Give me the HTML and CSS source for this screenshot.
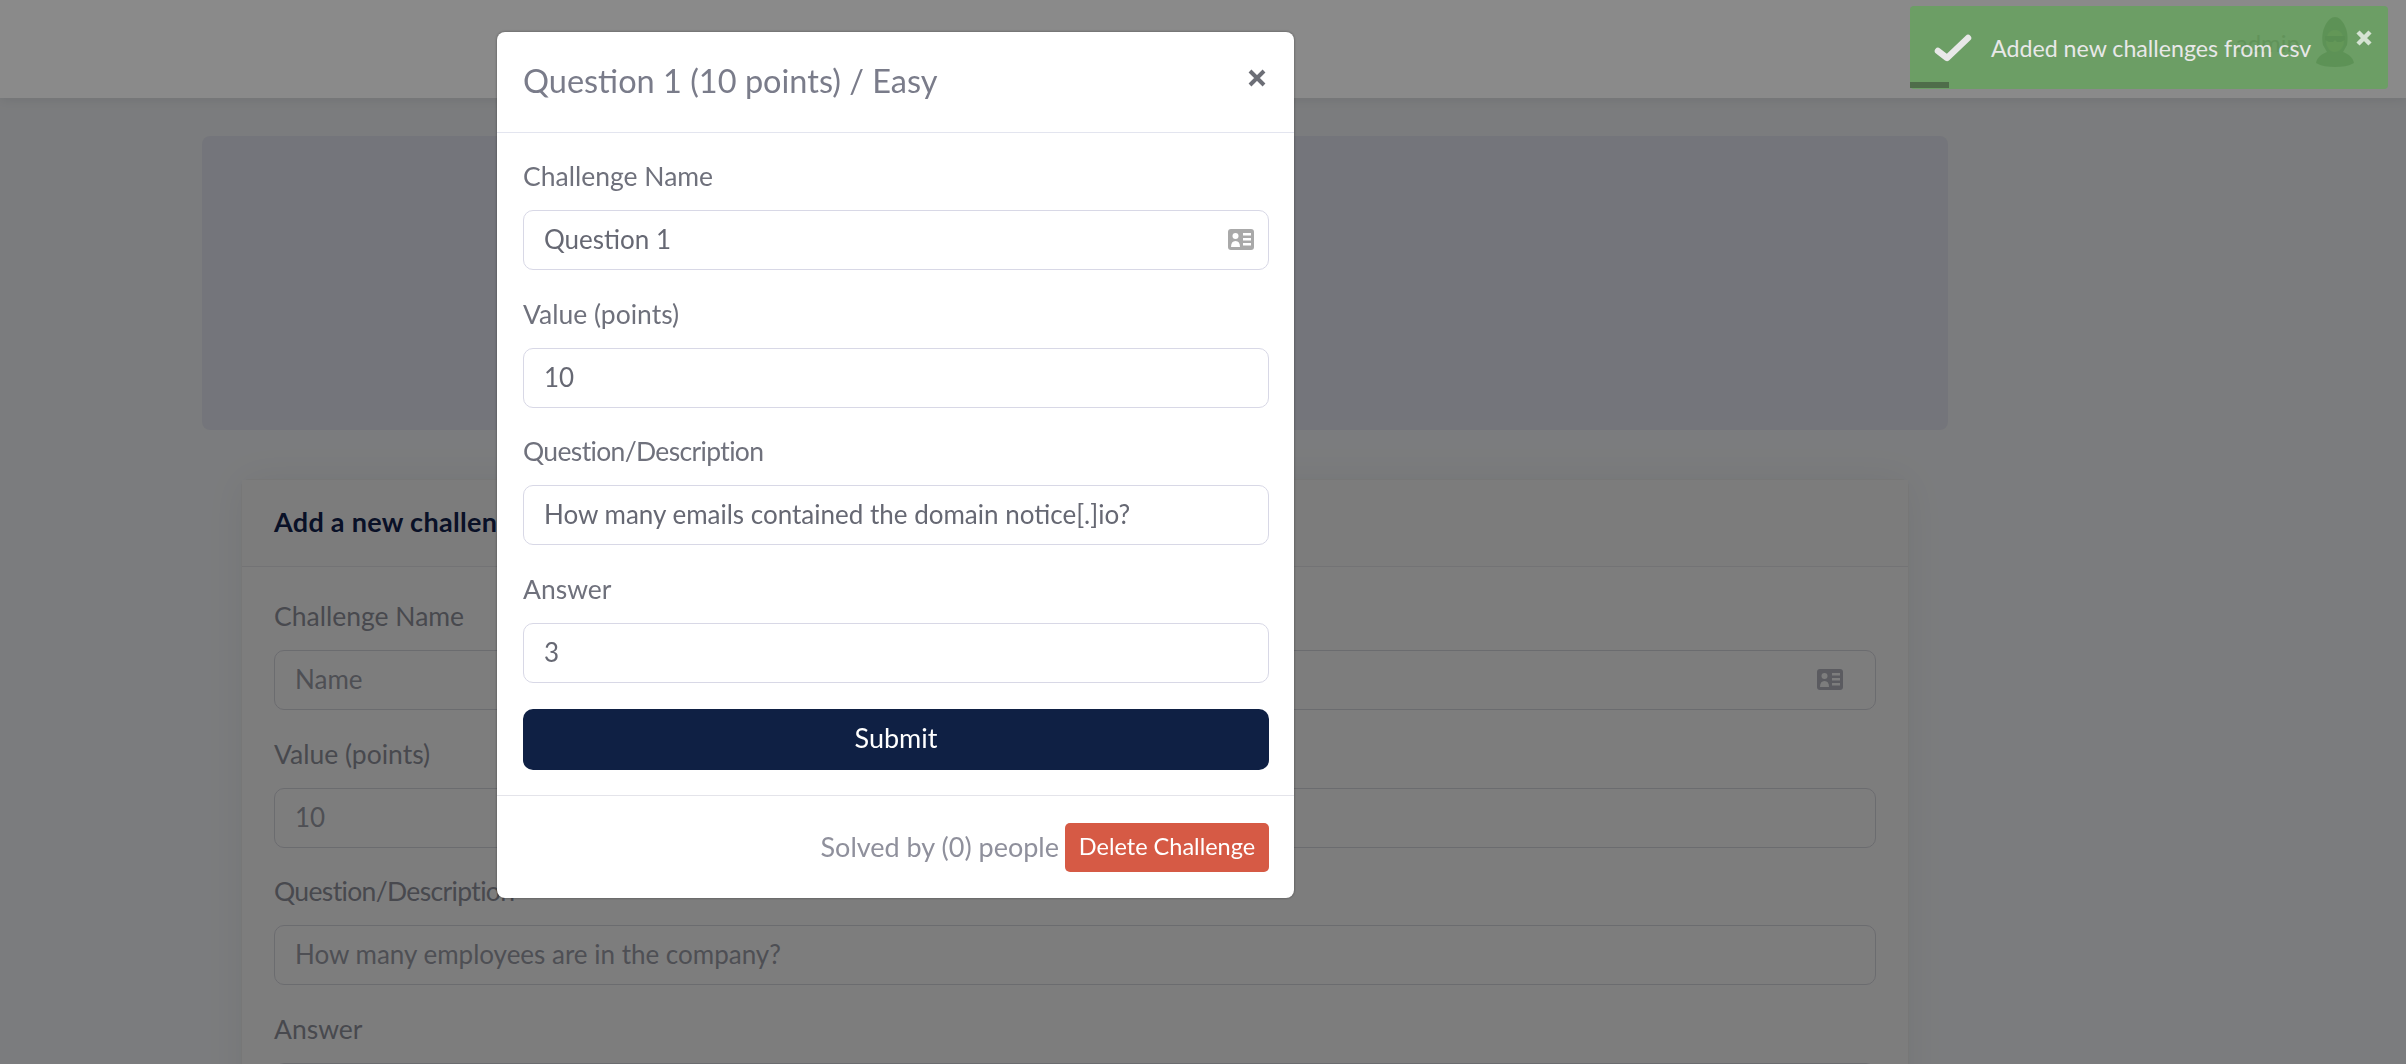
FILE: index.html
```html
<!DOCTYPE html>
<html lang="en">
<head>
    <meta charset="UTF-8">
    <title>Challenges</title>
    <link rel="stylesheet" href="styles.css">
</head>
<body>
    <nav class="navbar">
        <span class="nav-user">admin</span>
        <svg class="avatar" viewBox="0 0 44 52" width="44" height="52">
            <path d="M3 47c1-6 6-9 11-11l-4-7C7 14 15 1 22 1s15 13 12 28l-4 7c5 2 10 5 11 11-5 3-12 4-19 4S8 50 3 47z" fill="#7f987f"/>
            <ellipse cx="22" cy="25" rx="9" ry="11" fill="#b0c088"/>
            <path d="M12 20h20v4l-4 2h-4l-2-2-2 2h-4l-4-2z" fill="#60785f"/>
        </svg>
    </nav>

    <main class="container">
        <div class="jumbotron"></div>
        <div class="card">
            <div class="card-header">Add a new challenge</div>
            <div class="card-body">
                <div class="form-group">
                    <label>Challenge Name</label>
                    <div class="field field-muted">
                        <span>Name</span>
                        <svg class="id-icon" viewBox="0 0 26 21"><use href="#idCard"/></svg>
                    </div>
                </div>
                <div class="form-group">
                    <label>Value (points)</label>
                    <div class="field field-muted"><span>10</span></div>
                </div>
                <div class="form-group">
                    <label class="label-tight">Question/Description</label>
                    <div class="field field-muted"><span>How many employees are in the company?</span></div>
                </div>
                <div class="form-group">
                    <label>Answer</label>
                    <div class="field field-muted"><span></span></div>
                </div>
            </div>
        </div>
    </main>

    <div class="backdrop"></div>

    <div class="modal">
        <div class="modal-header">
            <h5>Question 1 (10 points) / Easy</h5>
            <svg class="close" viewBox="0 0 20 18" width="20" height="18">
                <path d="M3 2l14 14M17 2L3 16" stroke="#6c6e76" stroke-width="4" fill="none"/>
            </svg>
        </div>
        <div class="modal-body">
            <div class="form-group">
                <label>Challenge Name</label>
                <div class="field">
                    <span>Question 1</span>
                    <svg class="id-icon" viewBox="0 0 26 21">
                        <defs>
                            <g id="idCard">
                                <rect width="26" height="21" rx="3" fill="currentColor"/>
                                <circle cx="7.500" cy="7" r="3" fill="var(--icon-cut)"/>
                                <path d="M3 18c0-4 1.500-6 4.500-6s4.500 2 4.500 6z" fill="var(--icon-cut)"/>
                                <path d="M15 4h8v2.500h-8zM15 9h8v2.500h-8zM15 14h8v2.500h-8z" fill="var(--icon-cut)"/>
                            </g>
                        </defs>
                        <use href="#idCard"/>
                    </svg>
                </div>
            </div>
            <div class="form-group">
                <label>Value (points)</label>
                <div class="field"><span>10</span></div>
            </div>
            <div class="form-group">
                <label class="label-tight">Question/Description</label>
                <div class="field"><span>How many emails contained the domain notice[.]io?</span></div>
            </div>
            <div class="form-group">
                <label>Answer</label>
                <div class="field"><span>3</span></div>
            </div>
            <button class="btn-submit">Submit</button>
        </div>
        <div class="modal-footer">
            <span class="solved">Solved by (0) people</span>
            <button class="btn-delete">Delete Challenge</button>
        </div>
    </div>

    <div class="toast">
        <svg class="toast-check" viewBox="0 0 38 28" width="38" height="28">
            <path d="M4 17l9 7L34 4" stroke="#fff" stroke-width="6.500" stroke-linecap="round" stroke-linejoin="round" fill="none"/>
        </svg>
        <span class="toast-text">Added new challenges from csv</span>
        <svg class="toast-close" viewBox="0 0 16 16" width="16" height="16">
            <path d="M2 2l12 12M14 2L2 14" stroke="#e8f9e5" stroke-width="4.500" fill="none"/>
        </svg>
        <div class="toast-progress"></div>
    </div>
</body>
</html>
```

FILE: styles.css
```css
* {
    box-sizing: border-box;
}
html, body {
    height: 1064px;
    overflow: hidden;
}
body {
    margin: 0;
    font-family: Lato, "Noto Sans", sans-serif;
    font-size: 26px;
    background-color: #e4e6e9;
    color: #666873;
}
.navbar {
    height: 98px;
    background-color: #fff;
    box-shadow: 0 2px 12px rgba(0,0,0,0.08);
    display: flex;
    align-items: flex-start;
    justify-content: flex-end;
    gap: 13px;
    padding: 16px 49px 0 0;
}
.nav-user {
    margin-top: 12px;
    font-size: 24px;
    color: #a3a3a3;
}
.container {
    width: 1746px;
    margin-left: 202px;
    padding-top: 38px;
}
.jumbotron {
    height: 294px;
    background-color: #d7d9e3;
    border-radius: 8px;
}
.card {
    width: 1668px;
    margin: 49px 0 0 39px;
    background-color: #e8e8e8;
    border: 1px solid #dcdcdc;
    border-radius: 8px;
    box-shadow: 0 0 40px rgba(0,0,0,0.06);
}
.card-header {
    height: 87px;
    padding: 0 32px 4px;
    display: flex;
    align-items: center;
    font-size: 27px;
    letter-spacing: 0.3px;
    font-weight: 700;
    color: #122048;
    background-color: #e6e6e6;
    border-bottom: 1px solid #d5d5d8;
}
.card-body {
    padding: 32px 32px 0;
}
.form-group {
    margin-bottom: 26.5px;
}
label {
    display: block;
    height: 36px;
    line-height: 35px;
    font-size: 26.5px;
    margin-bottom: 15px;
    color: #6f717c;
}
.label-tight {
    letter-spacing: -0.65px;
}
.field {
    --icon-cut: #fff;
    height: 60px;
    padding: 0 14px 2px 20px;
    display: flex;
    align-items: center;
    justify-content: space-between;
    border: 1px solid #d8d8e6;
    border-radius: 10px;
    background-color: #fff;
}
.id-icon {
    width: 26px;
    height: 21px;
    color: #a9a9a9;
}
.field-muted {
    --icon-cut: #e8e8e8;
    padding-right: 32px;
    background-color: transparent;
    border-color: #c6c7ce;
    color: #90929b;
}
.field-muted .id-icon {
    color: #a8a9b2;
}
.card label {
    color: #858791;
}
.backdrop {
    position: fixed;
    inset: 0;
    background-color: rgba(0,0,0,0.46);
}
.modal {
    position: fixed;
    top: 32px;
    left: 497px;
    width: 797px;
    height: 866px;
    background-color: #fff;
    border-radius: 8px;
    box-shadow: 0 0 3px rgba(0,0,0,0.4);
}
.modal-header {
    height: 101px;
    padding: 0 27px 0 26px;
    display: flex;
    justify-content: space-between;
    border-bottom: 1px solid #e3e5ef;
}
.modal-header h5 {
    margin: 24px 0 0;
    font-size: 32.500px;
    line-height: 50px;
    font-weight: 400;
    color: #7a7c8a;
}
.close {
    margin-top: 37px;
}
.modal-body {
    padding: 26px 25px 25px 26px;
}
.btn-submit {
    display: block;
    width: 100%;
    height: 61px;
    padding: 0 0 4px;
    border: none;
    border-radius: 10px;
    background-color: #0f2044;
    color: #fff;
    font-family: inherit;
    font-size: 27px;
}
.modal-footer {
    padding: 27px 25px 26px;
    border-top: 1px solid #e4e4ea;
    display: flex;
    justify-content: flex-end;
    align-items: center;
    gap: 6px;
}
.solved {
    margin-bottom: 3px;
    font-size: 27px;
    color: #8f909c;
}
.btn-delete {
    width: 204px;
    height: 49px;
    padding: 0 0 3px;
    border: none;
    border-radius: 5px;
    background-color: #d65a45;
    color: #fff;
    font-family: inherit;
    font-size: 23.500px;
}
.toast {
    position: fixed;
    top: 6px;
    left: 1910px;
    width: 478px;
    height: 83px;
    display: flex;
    align-items: center;
    padding-left: 24px;
    background-color: rgb(100,163,92);
    opacity: 0.8;
    border-radius: 4px;
    color: #fff;
    font-size: 23.200px;
}
.toast-check {
    margin-right: 19px;
}
.toast-close {
    position: absolute;
    top: 24px;
    right: 16px;
}
.toast-progress {
    position: absolute;
    left: 0;
    bottom: 1px;
    width: 39px;
    height: 6px;
    background-color: #40663a;
}
```
